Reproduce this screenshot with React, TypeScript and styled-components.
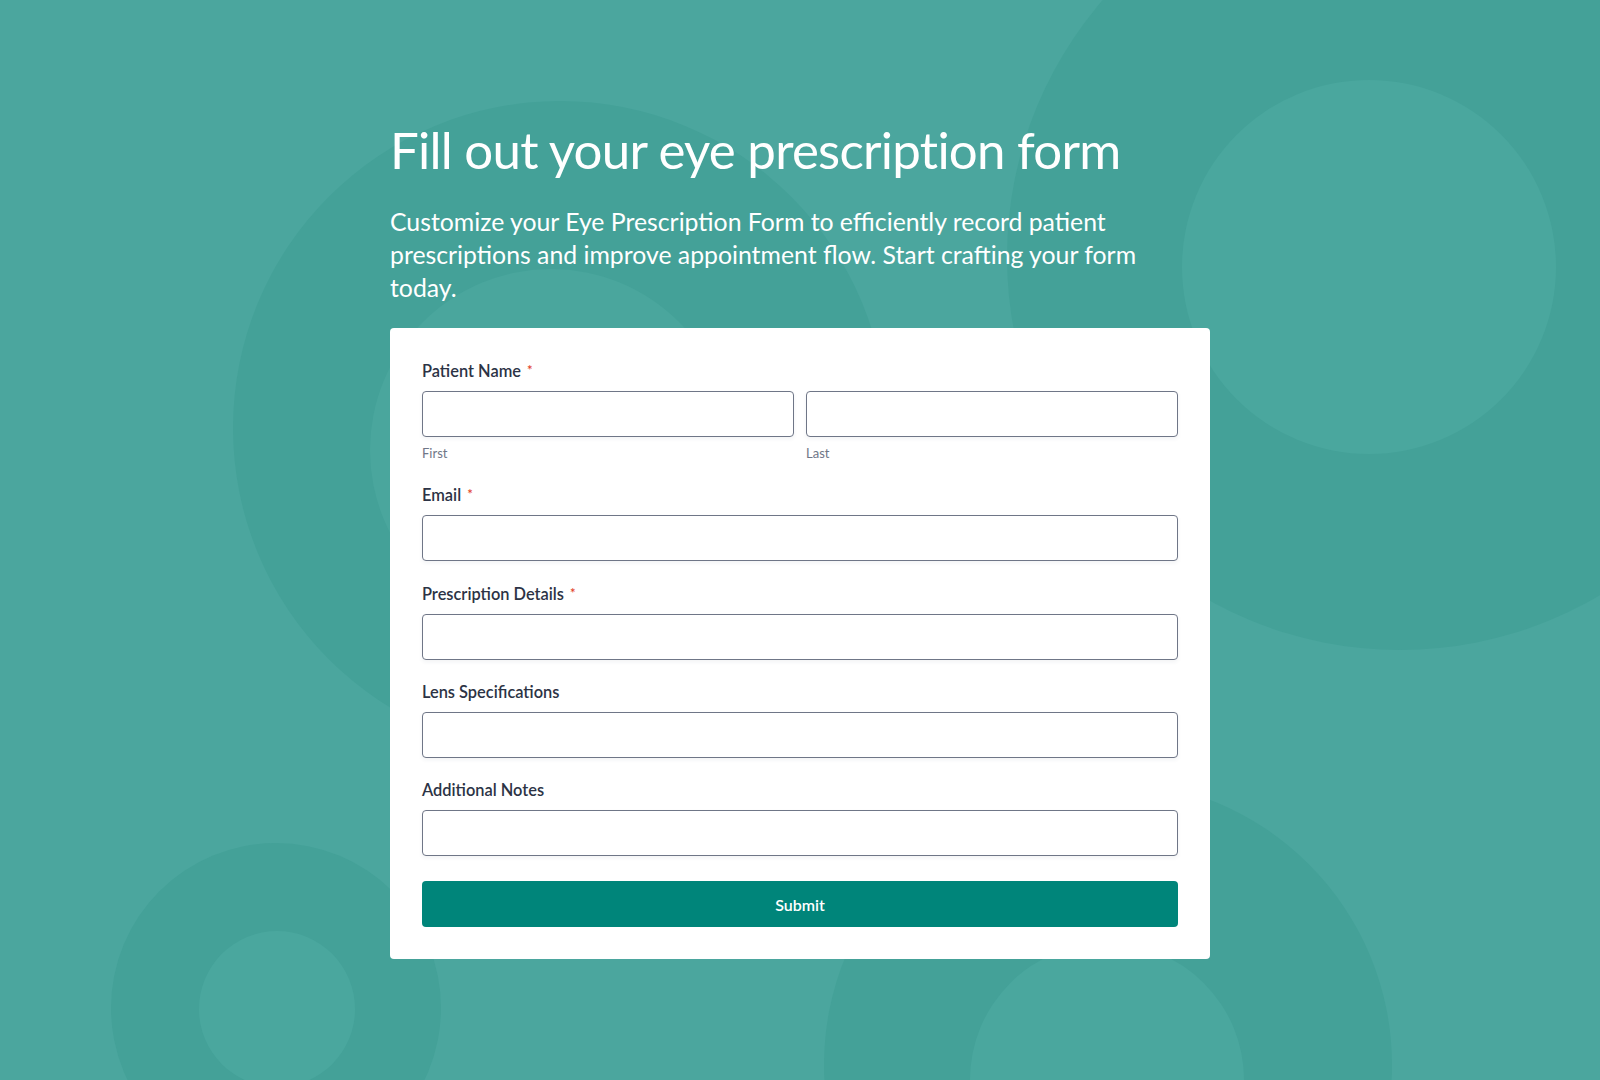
import React from 'react';
import styled, { createGlobalStyle } from 'styled-components';

const GlobalStyle = createGlobalStyle`
    html, body {
        margin: 0;
        padding: 0;
        background: #4ba69e;
    }
    * {
        box-sizing: border-box;
    }
`

const Page = styled.div`
    position: relative;
    min-height: 100vh;
    overflow: hidden;
    background: #4ba69e;
    font-family: Lato, 'Open Sans', sans-serif;
    padding-top: 119px;
    padding-bottom: 80px;
`

const Backdrop = styled.svg`
    position: absolute;
    top: 0;
    left: 0;
    width: 100%;
    height: 1080px;
    z-index: 0;
`

const Column = styled.main`
    position: relative;
    z-index: 1;
    width: 820px;
    margin: 0 auto;
    display: flex;
    flex-direction: column;
`

const Title = styled.h1`
    margin: 0;
    font-size: 51px;
    line-height: 1.2;
    font-weight: 400;
    letter-spacing: -0.75px;
    color: #ffffff;
`

const Lead = styled.p`
    margin: 25px 0 24px;
    font-size: 24.8px;
    line-height: 33px;
    color: #ffffff;
    max-width: 760px;
`

const Card = styled.form`
    background: #ffffff;
    border-radius: 4px;
    padding: 32px;
    display: flex;
    flex-direction: column;
    gap: 22px;
`

const Field = styled.div`
    display: flex;
    flex-direction: column;
`

const Label = styled.label`
    font-size: 16.4px;
    line-height: 20px;
    font-weight: 600;
    color: #2c3345;
    margin-bottom: 10px;
`

const Star = styled.span`
    color: #e2432a;
    font-size: 13px;
    margin-left: 6px;
    vertical-align: 2px;
`

const Split = styled.div`
    display: grid;
    grid-template-columns: 1fr 1fr;
    gap: 12px;
`

const Input = styled.input`
    width: 100%;
    height: 46px;
    border: 1px solid #6f7687;
    border-radius: 4px;
    background: #ffffff;
    box-shadow: 0 2px 4px rgba(37, 45, 91, 0.06);
    padding: 0 12px;
    font-family: inherit;
    font-size: 15px;
    outline: none;
`

const Sublabel = styled.span`
    display: block;
    margin-top: 7px;
    font-size: 13px;
    line-height: 18px;
    color: #6f7687;
`

const Submit = styled.button`
    margin-top: 3px;
    height: 46px;
    border: none;
    border-radius: 4px;
    background: #00857a;
    color: #ffffff;
    font-family: inherit;
    font-size: 16px;
    font-weight: 600;
    cursor: pointer;
`

const fields = [
    { label: 'Email', required: true },
    { label: 'Prescription Details', required: true },
    { label: 'Lens Specifications', required: false },
    { label: 'Additional Notes', required: false },
]

export default function App() {
    return (
        <Page>
            <GlobalStyle />
            <Backdrop viewBox="0 0 1600 1080" preserveAspectRatio="xMidYMin slice">
                <circle cx="560" cy="428" r="327" fill="#44a198" />
                <circle cx="551" cy="450" r="181" fill="#4aa69d" />
                <circle cx="1400" cy="257" r="393" fill="#44a198" />
                <circle cx="1369" cy="267" r="187" fill="#4aa79e" />
                <circle cx="276" cy="1008" r="165" fill="#44a198" />
                <circle cx="277" cy="1009" r="78" fill="#4aa79e" />
                <circle cx="1108" cy="1065" r="284" fill="#44a198" />
                <circle cx="1107" cy="1080" r="137" fill="#4aa79e" />
            </Backdrop>
            <Column>
                <Title>Fill out your eye prescription form</Title>
                <Lead>
                    Customize your Eye Prescription Form to efficiently record patient
                    prescriptions and improve appointment flow. Start crafting your form today.
                </Lead>
                <Card onSubmit={(e) => e.preventDefault()}>
                    <Field>
                        <Label>
                            Patient Name<Star>*</Star>
                        </Label>
                        <Split>
                            <div>
                                <Input type="text" />
                                <Sublabel>First</Sublabel>
                            </div>
                            <div>
                                <Input type="text" />
                                <Sublabel>Last</Sublabel>
                            </div>
                        </Split>
                    </Field>
                    {fields.map((field) => (
                        <Field key={field.label}>
                            <Label>
                                {field.label}
                                {field.required && <Star>*</Star>}
                            </Label>
                            <Input type={field.label === 'Email' ? 'email' : 'text'} />
                        </Field>
                    ))}
                    <Submit type="submit">Submit</Submit>
                </Card>
            </Column>
        </Page>
    )
}
